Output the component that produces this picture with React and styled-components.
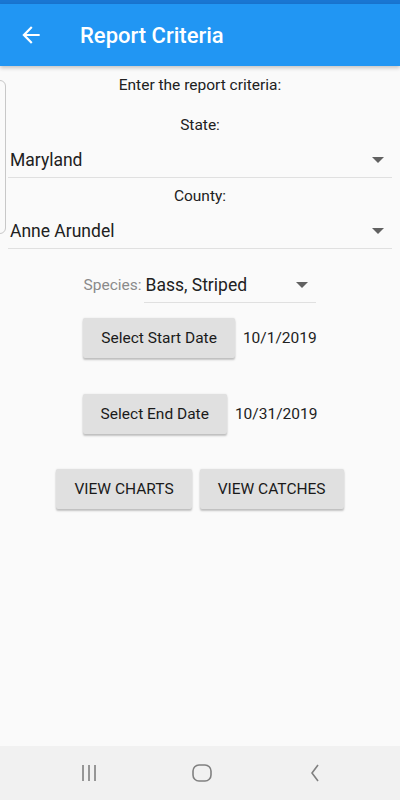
import React from "react";
import styled, { createGlobalStyle } from "styled-components";

const Global = createGlobalStyle`
  html, body { margin: 0; padding: 0; }
  body { font-family: Roboto, "Noto Sans", sans-serif; background: #fafafa; }
  #root { width: 400px; height: 800px; }
`;

const Screen = styled.div`
  position: relative;
  width: 400px;
  height: 800px;
  display: flex;
  flex-direction: column;
  background: #fafafa;
  overflow: hidden;
`;

const StatusBar = styled.div`
  height: 4px;
  background: #1976d2;
`;

const AppBar = styled.header`
  height: 62px;
  background: #2196f3;
  display: flex;
  align-items: center;
  padding-left: 18px;
  box-shadow: 0 2px 4px rgba(0, 0, 0, 0.22);
  position: relative;
  z-index: 1;
`;

const Title = styled.h1`
  margin: 0 0 0 36px;
  font-size: 22px;
  font-weight: 500;
  color: #fff;
`;

const Content = styled.main`
  flex: 1;
  display: flex;
  flex-direction: column;
  align-items: center;
  padding: 9px 8px 0;
`;

const Caption = styled.div`
  font-size: 15.5px;
  color: #212121;
  line-height: 20px;
  margin-top: ${(p) => p.$mt || 0}px;
  text-align: center;
`;

const Dropdown = styled.div`
  display: flex;
  align-items: center;
  justify-content: space-between;
  align-self: ${(p) => (p.$full ? "stretch" : "auto")};
  width: ${(p) => (p.$w ? p.$w + "px" : "auto")};
  height: ${(p) => p.$h}px;
  padding: ${(p) => p.$pt || 0}px 8px 0 ${(p) => p.$pl || 2}px;
  border-bottom: 1px solid #e0e0e0;
  box-sizing: border-box;
`;

const DropValue = styled.span`
  font-size: 17.5px;
  color: #212121;
`;

const Caret = styled.span`
  width: 0;
  height: 0;
  border-left: 6px solid transparent;
  border-right: 6px solid transparent;
  border-top: 6px solid #616161;
`;

const SpeciesRow = styled.div`
  display: flex;
  align-items: center;
  margin-top: 18px;
`;

const SpeciesLabel = styled.span`
  font-size: 15.5px;
  color: #8a8a8a;
  margin-right: 3px;
`;

const DateRow = styled.div`
  display: flex;
  align-items: center;
  gap: 8px;
  margin-top: ${(p) => p.$mt || 0}px;
`;

const Button = styled.button`
  height: 40px;
  padding: 0 18px;
  border: none;
  border-radius: 2px;
  background: #e0e0e0;
  box-shadow: 0 2px 2px rgba(0, 0, 0, 0.22), 0 0 2px rgba(0, 0, 0, 0.1);
  font-family: Roboto, sans-serif;
  font-size: 15.5px;
  font-weight: 400;
  color: #1a1a1a;
  text-transform: ${(p) => (p.$caps ? "uppercase" : "none")};
`;

const DateText = styled.span`
  font-size: 15.5px;
  color: #212121;
`;

const ActionRow = styled.div`
  display: flex;
  gap: 8px;
  margin-top: 35px;
`;

const NavBar = styled.nav`
  height: 54px;
  background: #f1f1f1;
  display: flex;
  align-items: center;
  justify-content: center;
  gap: 90px;
  padding-left: 3px;
`;

const NavIcon = styled.svg`
  width: 22px;
  height: 22px;
  stroke: #808080;
  fill: none;
`;

const EdgeTab = styled.div`
  position: absolute;
  left: -6px;
  top: 80px;
  width: 10px;
  height: 152px;
  border: 1px solid #c8c8c8;
  border-radius: 6px;
`;

export default function App() {
  return (
    <Screen>
      <Global />
      <StatusBar />
      <AppBar>
        <svg width="26" height="26" viewBox="0 0 24 24" fill="#fff">
          <path d="M20 11H7.83l5.59-5.59L12 4l-8 8 8 8 1.41-1.41L7.83 13H20v-2z" />
        </svg>
        <Title>Report Criteria</Title>
      </AppBar>
      <Content>
        <Caption>Enter the report criteria:</Caption>
        <Caption $mt={20}>State:</Caption>
        <Dropdown $full $h={43} $pt={8}>
          <DropValue>Maryland</DropValue>
          <Caret />
        </Dropdown>
        <Caption $mt={8}>County:</Caption>
        <Dropdown $full $h={43} $pt={8}>
          <DropValue>Anne Arundel</DropValue>
          <Caret />
        </Dropdown>
        <SpeciesRow>
          <SpeciesLabel>Species:</SpeciesLabel>
          <Dropdown $w={172} $h={36} $pl={1}>
            <DropValue>Bass, Striped</DropValue>
            <Caret />
          </Dropdown>
        </SpeciesRow>
        <DateRow $mt={15}>
          <Button>Select Start Date</Button>
          <DateText>10/1/2019</DateText>
        </DateRow>
        <DateRow $mt={36}>
          <Button>Select End Date</Button>
          <DateText>10/31/2019</DateText>
        </DateRow>
        <ActionRow>
          <Button $caps>View Charts</Button>
          <Button $caps>View Catches</Button>
        </ActionRow>
      </Content>
      <NavBar>
        <NavIcon viewBox="0 0 22 22" strokeWidth="1.6">
          <path d="M4 3v16M10 3v16M16 3v16" />
        </NavIcon>
        <NavIcon viewBox="0 0 22 22" strokeWidth="1.6">
          <rect x="2" y="3" width="18" height="16" rx="6" />
        </NavIcon>
        <NavIcon viewBox="0 0 22 22" strokeWidth="1.6">
          <path d="M15 3l-6 8 6 8" />
        </NavIcon>
      </NavBar>
      <EdgeTab />
    </Screen>
  );
}
